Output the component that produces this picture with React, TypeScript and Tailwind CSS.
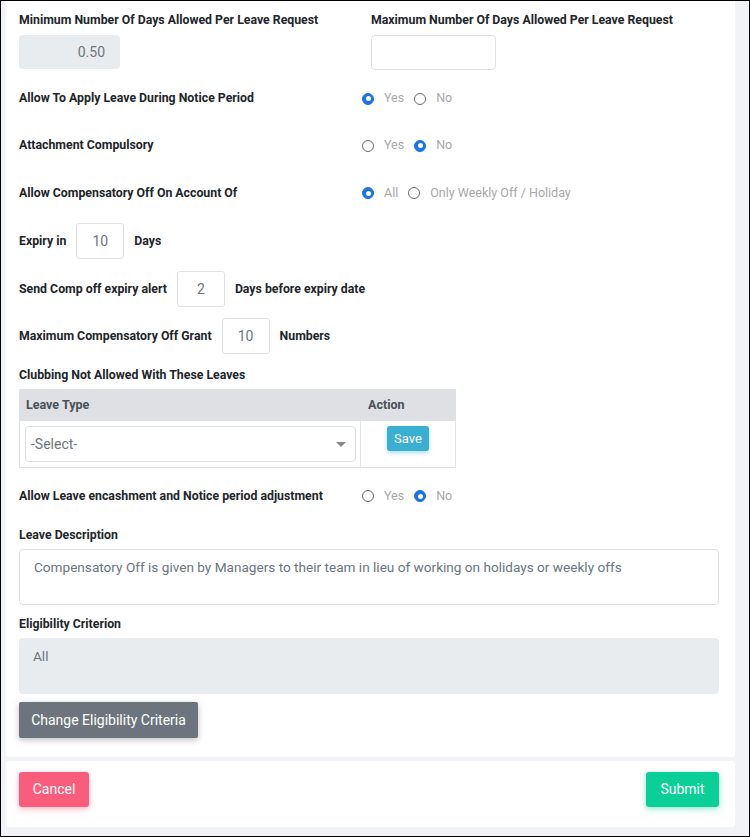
import React, { useState } from 'react';

const font = { fontFamily: 'Roboto, "Liberation Sans", sans-serif' };

interface RadioOption {
  label: string;
  value: string;
}

const RadioGroup: React.FC<{ name: string; options: RadioOption[]; value: string; onChange: (v: string) => void }> = ({ name, options, value, onChange }) => (
  <div className="flex items-center font-normal">
    {options.map((o, i) => (
      <label key={o.value} className={`flex items-center cursor-pointer ${i > 0 ? 'ml-[10px]' : ''}`}>
        <span
          onClick={() => onChange(o.value)}
          className={`w-[12px] h-[12px] rounded-full flex items-center justify-center border ${value === o.value ? 'border-[#1a73e8] bg-[#1a73e8]' : 'border-[#6b6b6b] bg-white'}`}
        >
          {value === o.value && <span className="w-[5px] h-[5px] rounded-full bg-white" />}
        </span>
        <span className="ml-[10px] text-[12.5px] font-normal text-[#a8a8a8]">{o.label}</span>
        <input type="radio" name={name} className="hidden" readOnly checked={value === o.value} />
      </label>
    ))}
  </div>
);

const yesNo = [
  { label: 'Yes', value: 'yes' },
  { label: 'No', value: 'no' },
];

const SmallInput: React.FC<{ value: string }> = ({ value }) => (
  <div className="w-[48px] h-[36px] border border-[#dee2e6] rounded-[3px] flex items-center justify-center text-[14px] font-normal text-[#6c757d]">
    {value}
  </div>
);

export default function App() {
  const [notice, setNotice] = useState('yes');
  const [attach, setAttach] = useState('no');
  const [account, setAccount] = useState('all');
  const [encash, setEncash] = useState('no');

  return (
    <div style={font} className="w-[750px] h-[837px] border border-black bg-[#f2f3f7] overflow-hidden box-border">
      <div className="ml-[5px] w-[729px] bg-white rounded-b-[3px] pl-[13px] pr-[16px] pt-[11px] pb-[19px] h-[756px]">
        {/* min / max */}
        <div className="flex">
          <div className="w-[352px]">
            <div className="text-[12.3px] leading-[16px] font-bold text-[#212529]">Minimum Number Of Days Allowed Per Leave Request</div>
            <div className="mt-[7px] w-[101px] h-[34px] bg-[#e9ecef] rounded-[4px] flex items-center justify-end pr-[15px] text-[14px] text-[#6c757d]">
              0.50
            </div>
          </div>
          <div>
            <div className="text-[12.3px] leading-[16px] font-bold text-[#212529]">Maximum Number Of Days Allowed Per Leave Request</div>
            <div className="mt-[7px] w-[125px] h-[35px] border border-[#dee2e6] rounded-[4px]" />
          </div>
        </div>

        {/* radio rows */}
        <div className="mt-[5px] text-[12.3px] font-bold text-[#212529]">
          <div className="flex items-center h-[47px]">
            <div className="w-[343px]">Allow To Apply Leave During Notice Period</div>
            <RadioGroup name="notice" options={yesNo} value={notice} onChange={setNotice} />
          </div>
          <div className="flex items-center h-[47px]">
            <div className="w-[343px]">Attachment Compulsory</div>
            <RadioGroup name="attach" options={yesNo} value={attach} onChange={setAttach} />
          </div>
          <div className="flex items-center h-[48px]">
            <div className="w-[343px]">Allow Compensatory Off On Account Of</div>
            <RadioGroup
              name="account"
              options={[
                { label: 'All', value: 'all' },
                { label: 'Only Weekly Off / Holiday', value: 'weekly' },
              ]}
              value={account}
              onChange={setAccount}
            />
          </div>
        </div>

        {/* inline inputs */}
        <div className="mt-[6px] flex items-center gap-[10px] text-[12.3px] font-bold text-[#212529]">
          <span>Expiry in</span>
          <SmallInput value="10" />
          <span>Days</span>
        </div>
        <div className="mt-[12px] flex items-center gap-[10px] text-[12.3px] font-bold text-[#212529]">
          <span>Send Comp off expiry alert</span>
          <SmallInput value="2" />
          <span>Days before expiry date</span>
        </div>
        <div className="mt-[11px] flex items-center gap-[10px] text-[12.3px] font-bold text-[#212529]">
          <span>Maximum Compensatory Off Grant</span>
          <SmallInput value="10" />
          <span>Numbers</span>
        </div>

        {/* clubbing table */}
        <div className="mt-[13px] text-[12.3px] leading-[16px] font-bold text-[#212529]">Clubbing Not Allowed With These Leaves</div>
        <div className="mt-[6px] w-[437px] border border-[#dee2e6]">
          <div className="flex h-[31px] items-center bg-[#dee0e3] text-[12.5px] font-bold text-[#495057]">
            <div className="w-[341px] pl-[6px]">Leave Type</div>
            <div className="pl-[7px]">Action</div>
          </div>
          <div className="flex h-[46px]">
            <div className="w-[341px] border-r border-[#dee2e6] pl-[5px] pt-[5px]">
              <div className="w-[331px] h-[36px] border border-[#dee2e6] rounded-[4px] flex items-center justify-between pl-[5px] pr-[9px] text-[14px] text-[#6c757d]">
                <span>-Select-</span>
                <span className="w-0 h-0 border-l-[5px] border-r-[5px] border-t-[5px] border-l-transparent border-r-transparent border-t-[#888]" />
              </div>
            </div>
            <div className="pl-[26px] pt-[5px]">
              <button className="w-[42px] h-[25px] rounded-[3px] bg-[#39afd1] text-white text-[13px] shadow-[0_2px_4px_rgba(57,175,209,0.4)]">Save</button>
            </div>
          </div>
        </div>

        <div className="flex items-center h-[56px]">
          <div className="w-[343px] text-[12.3px] font-bold text-[#212529]">Allow Leave encashment and Notice period adjustment</div>
          <RadioGroup name="encash" options={yesNo} value={encash} onChange={setEncash} />
        </div>

        {/* description */}
        <div className="mt-[3px] text-[12.3px] leading-[16px] font-bold text-[#212529]">Leave Description</div>
        <div className="mt-[6px] h-[56px] border border-[#dee2e6] rounded-[4px] px-[14px] pt-[7px] text-[13.6px] text-[#6c757d]">
          Compensatory Off is given by Managers to their team in lieu of working on holidays or weekly offs
        </div>

        <div className="mt-[11px] text-[12.3px] leading-[16px] font-bold text-[#212529]">Eligibility Criterion</div>
        <div className="mt-[6px] h-[56px] bg-[#e9ecef] rounded-[4px] px-[14px] pt-[8px] text-[13.6px] text-[#6c757d]">All</div>
        <button className="mt-[8px] w-[179px] h-[36px] bg-[#6c757d] rounded-[2px] text-white text-[14px] shadow-[0_2px_6px_rgba(0,0,0,0.25)]">
          Change Eligibility Criteria
        </button>
      </div>

      {/* footer */}
      <div className="mt-[4px] ml-[5px] w-[729px] h-[66px] bg-white rounded-[3px] pl-[13px] pr-[16px] pt-[11px] flex justify-between items-start">
        <button className="w-[70px] h-[35px] rounded-[3px] bg-[#fa5c7c] text-white text-[14px] shadow-[0_2px_6px_rgba(250,92,124,0.45)]">Cancel</button>
        <button className="w-[73px] h-[35px] rounded-[3px] bg-[#0acf97] text-white text-[14px] shadow-[0_2px_6px_rgba(10,207,151,0.45)]">Submit</button>
      </div>
    </div>
  );
}
